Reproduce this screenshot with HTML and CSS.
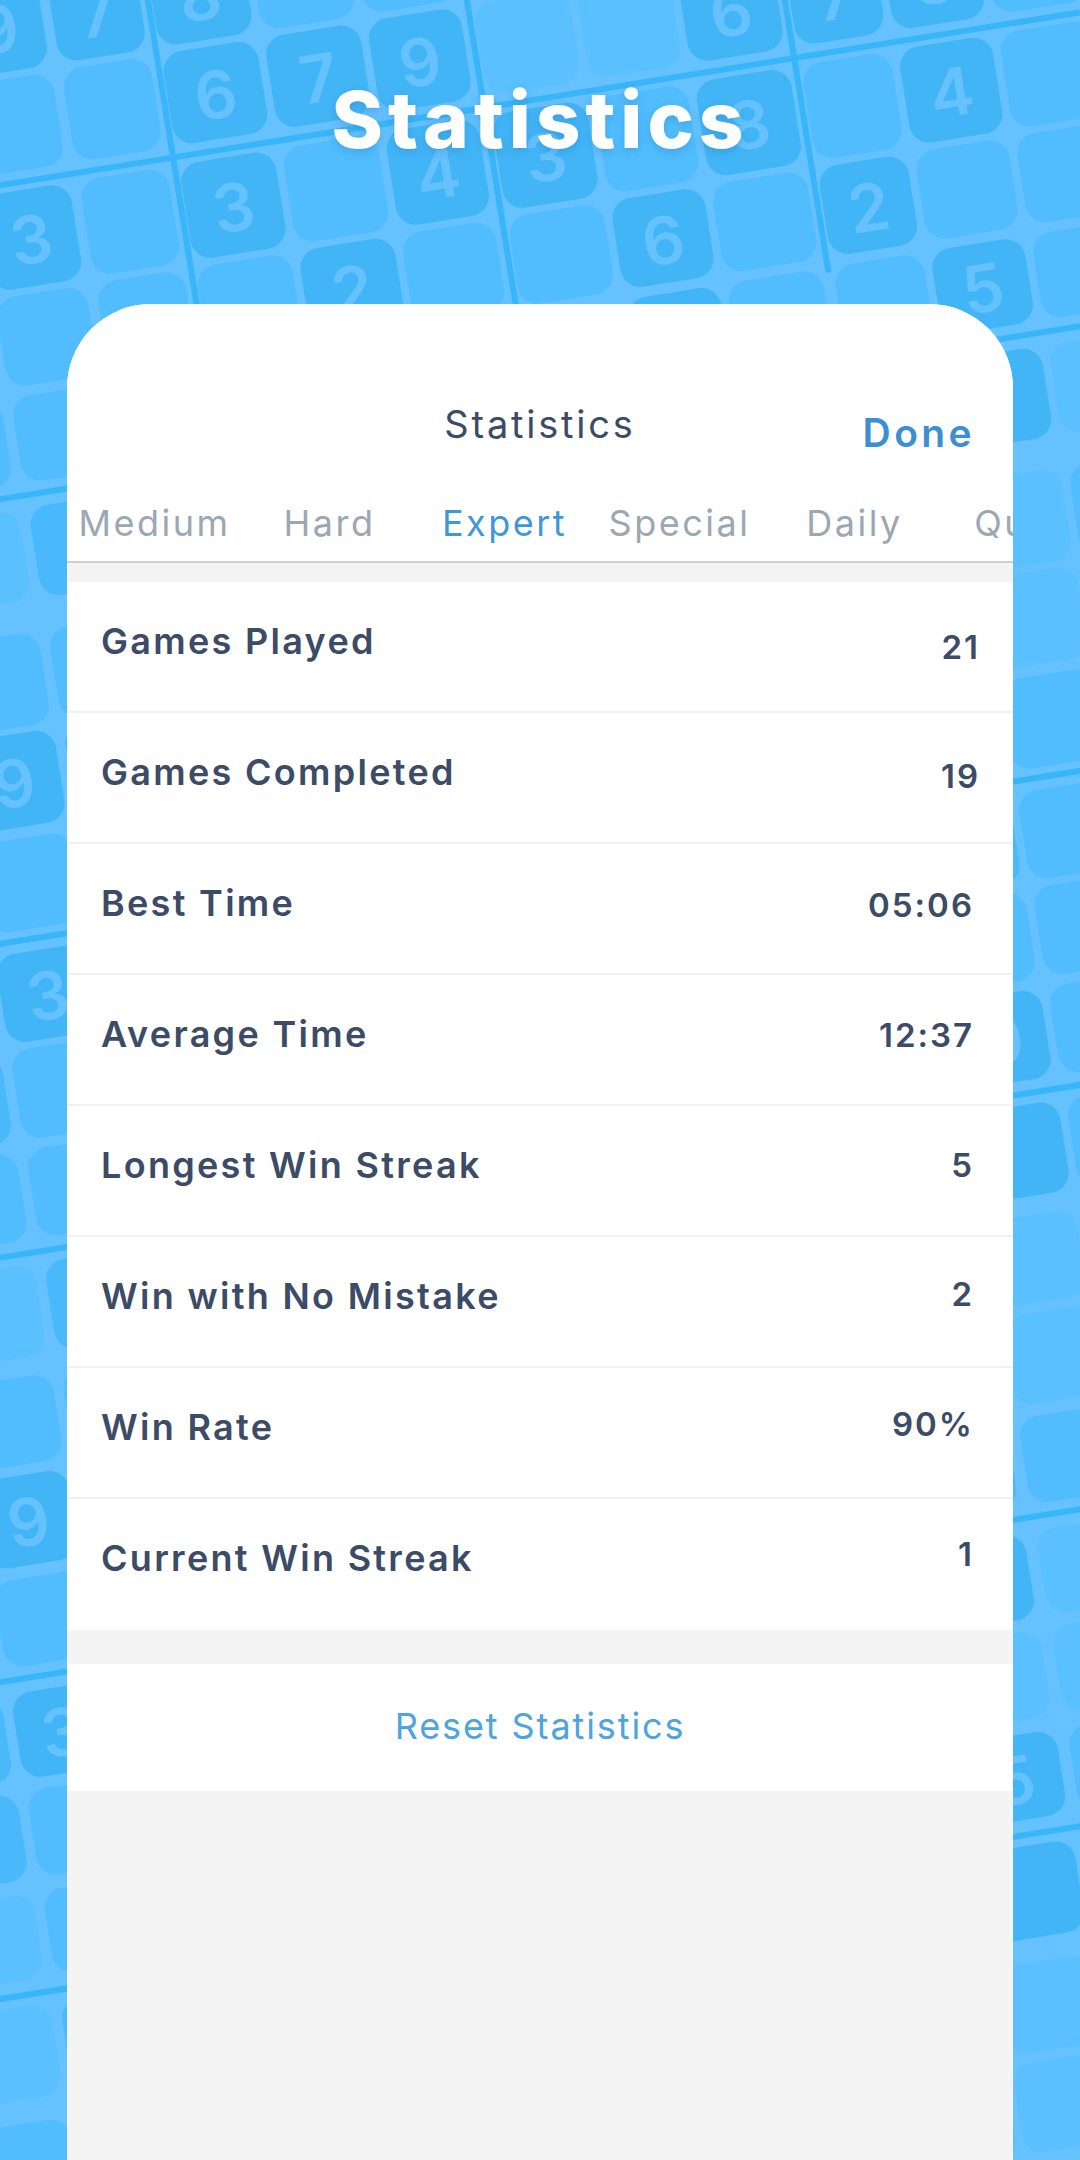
FILE: index.html
```html
<!DOCTYPE html>
<html lang="en">
<head>
    <meta charset="UTF-8">
    <meta name="viewport" content="width=device-width, initial-scale=1.0">
    <title>Statistics</title>
    <link rel="stylesheet" href="styles.css">
</head>
<body>
    <div class="page">
        <svg class="board" id="board" width="1080" height="2160" viewBox="0 0 1080 2160" aria-hidden="true"></svg>
        <h1 class="headline">Statistics</h1>
        <div class="card">
            <div class="card-top">
                <div class="nav">
                    <span class="nav-title">Statistics</span>
                    <span class="nav-done">Done</span>
                </div>
                <div class="tabs">
                    <span class="tab">Medium</span>
                    <span class="tab">Hard</span>
                    <span class="tab tab-active">Expert</span>
                    <span class="tab">Special</span>
                    <span class="tab">Daily</span>
                    <span class="tab">Quick</span>
                </div>
            </div>
            <div class="stats">
                <div class="stat"><span class="stat-name">Games Played</span><span class="stat-value">21</span></div>
                <div class="stat"><span class="stat-name">Games Completed</span><span class="stat-value">19</span></div>
                <div class="stat"><span class="stat-name">Best Time</span><span class="stat-value">05:06</span></div>
                <div class="stat"><span class="stat-name">Average Time</span><span class="stat-value">12:37</span></div>
                <div class="stat"><span class="stat-name">Longest Win Streak</span><span class="stat-value">5</span></div>
                <div class="stat"><span class="stat-name">Win with No Mistake</span><span class="stat-value">2</span></div>
                <div class="stat"><span class="stat-name">Win Rate</span><span class="stat-value">90%</span></div>
                <div class="stat"><span class="stat-name">Current Win Streak</span><span class="stat-value">1</span></div>
            </div>
            <div class="reset">Reset Statistics</div>
        </div>
    </div>
    <script src="script.js"></script>
</body>
</html>
```

FILE: styles.css
```css
* {
    box-sizing: border-box;
}

body {
    margin: 0;
    font-family: "Inter", "Open Sans", sans-serif;
}

.page {
    position: relative;
    width: 1080px;
    height: 2160px;
    overflow: hidden;
    background-color: #66c1ff;
    display: flex;
    flex-direction: column;
    align-items: center;
}

.board {
    position: absolute;
    top: 0;
    left: 0;
}

.tile {
    fill: #51bdff;
}

.tile-pale {
    fill: #5bc0ff;
}

.tile-mid {
    fill: #49b9fb;
}

.tile-dark {
    fill: #42b5f7;
}

.thick-line {
    fill: #38b6f9;
}

.digit {
    fill: #66c1ff;
    font-family: "Inter", sans-serif;
    font-size: 66px;
    font-weight: 600;
    text-anchor: middle;
}

.headline {
    position: relative;
    margin: 0;
    height: 304px;
    padding-top: 72px;
    font-size: 78px;
    line-height: 96px;
    font-weight: 800;
    letter-spacing: 5px;
    color: #fff;
    text-shadow: 0 3px 8px rgba(30, 110, 170, 0.3);
}

.card {
    position: relative;
    width: 946px;
    height: 1856px;
    background-color: #f4f4f4;
    border-radius: 84px 84px 0 0;
    overflow: hidden;
}

.card-top {
    height: 259px;
    background-color: #fff;
    border-bottom: 2px solid #cfcfcf;
}

.nav {
    position: relative;
    height: 194px;
    padding-top: 92px;
    text-align: center;
}

.nav-title {
    font-size: 38px;
    line-height: 56px;
    letter-spacing: 2.8px;
    color: #3c4b66;
}

.nav-done {
    position: absolute;
    right: 38px;
    top: 101px;
    font-size: 39px;
    line-height: 56px;
    font-weight: 600;
    letter-spacing: 3.4px;
    color: #3d8fd1;
}

.tabs {
    display: flex;
}

.tab {
    flex: 0 0 175px;
    text-align: center;
    font-size: 36px;
    line-height: 50px;
    letter-spacing: 2.5px;
    white-space: nowrap;
    color: #9ba7b3;
}

.tab-active {
    color: #3f97d8;
}

.stats {
    margin-top: 19px;
    background-color: #fff;
}

.stat {
    display: flex;
    justify-content: space-between;
    align-items: center;
    height: 131px;
    padding: 0 39px 0 34px;
    border-bottom: 2px solid #f1f1f1;
    color: #3c4b66;
    font-size: 36px;
    font-weight: 600;
    letter-spacing: 2.3px;
}

.stat:last-child {
    border-bottom: none;
}

.stat-name {
    position: relative;
    top: -6px;
}

.stat-value {
    position: relative;
    font-size: 33px;
    letter-spacing: 2px;
}

.stat:nth-child(1) .stat-value { top: 0; right: -6px; }
.stat:nth-child(2) .stat-value { top: -2px; right: -6px; }
.stat:nth-child(3) .stat-value { top: -4px; }
.stat:nth-child(4) .stat-value { top: -5px; }
.stat:nth-child(5) .stat-value { top: -6px; }
.stat:nth-child(6) .stat-value { top: -8px; }
.stat:nth-child(7) .stat-value { top: -9px; }
.stat:nth-child(8) .stat-value { top: -11px; }
.stat:nth-child(8) .stat-name { top: -7px; }

.reset {
    margin-top: 34px;
    height: 127px;
    background-color: #fff;
    text-align: center;
    font-size: 36px;
    line-height: 125px;
    letter-spacing: 1.9px;
    color: #4ea4de;
}
```

FILE: script.js
```js
// background sudoku board, tiles are [start, end] along each axis
const rows = [[-20, 72], [79, 172], [191, 288], [295, 385], [395, 481], [506, 597], [629, 721], [727, 820],
    [831, 922], [944, 1033], [1040, 1130], [1140, 1229], [1253, 1344], [1363, 1450], [1460, 1550], [1562, 1649],
    [1675, 1761], [1773, 1860], [1874, 1959], [1985, 2077], [2101, 2190], [2200, 2290]];
const cols = [[-360, -268], [-258, -167], [-157, -63], [-53, 39], [49, 138], [150, 246], [254, 350], [358, 452],
    [466, 562], [570, 664], [672, 768], [780, 870], [878, 972], [980, 1075], [1083, 1180]];

// "row,col": digit ('' = dark tile without a number)
const dark = {
    '0,3': '9', '0,4': '7', '0,5': '8', '1,5': '6', '1,6': '7', '1,7': '9', '1,10': '6', '1,11': '7', '1,12': '8',
    '2,3': '3', '2,5': '3', '2,7': '4', '2,8': '3', '2,10': '8', '2,12': '4',
    '3,6': '2', '3,9': '6', '3,11': '2', '4,9': '', '4,12': '5', '5,12': '',
    '7,2': '9', '7,3': '', '9,2': '3', '11,11': '9', '12,11': '', '14,1': '9',
    '16,1': '3', '16,10': '', '18,10': '5', '19,10': ''
};
const mid = ['5,3', '9,11', '10,1', '12,2', '15,10', '16,0', '17,0', '19,1', '0,10', '0,11'];
const pale = ['5,13', '6,12', '7,12', '13,11', '14,11', '17,10', '16,11', '17,11', '20,10', '21,10', '5,2',
    '12,1', '18,0', '19,0', '1,8', '1,9', '0,8', '0,9'];

const board = document.getElementById('board');
let html = '<g transform="rotate(-9.1)">';

rows.forEach(function (row, r) {
    cols.forEach(function (col, c) {
        const key = r + ',' + c;
        let cls = 'tile';
        if (key in dark) cls = 'tile-dark';
        else if (mid.includes(key)) cls = 'tile-mid';
        else if (pale.includes(key)) cls = 'tile-pale';
        html += '<rect class="' + cls + '" x="' + col[0] + '" y="' + row[0] + '" width="' + (col[1] - col[0]) +
            '" height="' + (row[1] - row[0]) + '" rx="20"/>';
        if (dark[key]) {
            html += '<text class="digit" x="' + (col[0] + col[1]) / 2 + '" y="' + ((row[0] + row[1]) / 2 + 26) + '">' + dark[key] + '</text>';
        }
    });
});

[183, 493, 932, 1242, 1661, 1974].forEach(function (v) {
    html += '<rect class="thick-line" x="-500" y="' + (v - 3) + '" width="2200" height="6"/>';
});
[146, 461, 775].forEach(function (u) {
    html += '<rect class="thick-line" x="' + (u - 3) + '" y="-100" width="6" height="500"/>';
});

board.innerHTML = html + '</g>';
```
